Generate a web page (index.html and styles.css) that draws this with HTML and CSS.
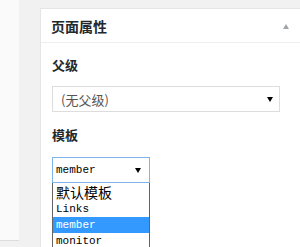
FILE: index.html
```html
<!DOCTYPE html>
<html lang="zh-CN">

<head>
    <meta charset="UTF-8">
    <meta name="viewport" content="width=device-width, initial-scale=1.0">
    <title>页面属性</title>

    <link rel="stylesheet" href="styles.css">
</head>

<body>
    <div class="wrap">
        <!-- 左側欄 -->
        <div class="side"></div>

        <!-- 頁面屬性面板 -->
        <div class="postbox">
            <div class="postbox-head">
                <h2 class="postbox-title">页面属性</h2>
                <span class="toggle"></span>
            </div>

            <div class="postbox-inside">
                <p class="field-label">父级</p>
                <div class="select select-parent">
                    <span class="select-value">(无父级)</span>
                    <span class="select-arrow"></span>
                </div>

                <p class="field-label field-template">模板</p>
                <div class="dropdown">
                    <div class="select select-template">
                        <span class="select-value mono">member</span>
                        <span class="select-arrow"></span>
                    </div>
                    <ul class="options">
                        <li class="option option-cjk">默认模板</li>
                        <li class="option">Links</li>
                        <li class="option selected">member</li>
                        <li class="option">monitor</li>
                    </ul>
                </div>
            </div>
        </div>
    </div>
</body>

</html>
```

FILE: styles.css
```css
html,
body {
    margin: 0;
    padding: 0;
    background-color: #f1f1f1;
    overflow: hidden;
    font-family: "Noto Sans CJK SC", "Liberation Sans", sans-serif;
    color: #23282d;
}

.wrap {
    display: flex;
    align-items: flex-start;
    width: 300px;
    height: 247px;
    overflow: hidden;
}

/* 左側欄 */
.side {
    flex: 0 0 19px;
    height: 240px;
    background-color: #fafafa;
    border-bottom: 1px solid #dcdcdc;
}

/* 面板（右邊與底部被截掉） */
.postbox {
    flex: 0 0 260px;
    box-sizing: border-box;
    margin-left: 21px;
    margin-top: 8px;
    height: 239px;
    overflow: hidden;
    background-color: #fff;
    border: 1px solid #e5e5e5;
    border-right: none;
    border-bottom: none;
}

.postbox-head {
    display: flex;
    align-items: center;
    justify-content: space-between;
    height: 33px;
    padding: 0 11px 0 10px;
    border-bottom: 1px solid #eee;
}

.postbox-title {
    margin: 0;
    font-size: 14px;
    font-weight: bold;
    line-height: 18px;
}

.toggle {
    width: 0;
    height: 0;
    border-left: 3px solid transparent;
    border-right: 3px solid transparent;
    border-bottom: 5px solid #a0a5aa;
    margin-top: 1px;
}

.postbox-inside {
    padding: 0 0 0 11px;
}

.field-label {
    margin: 13px 0 12px;
    font-size: 13px;
    font-weight: bold;
    line-height: 18px;
}

.field-template {
    margin: 14px 0 13px;
}

/* 下拉框 */
.select {
    display: flex;
    align-items: center;
    justify-content: space-between;
    box-sizing: border-box;
    height: 26px;
    border: 1px solid #ddd;
    background-color: #fff;
}

.select-parent {
    width: 228px;
    padding: 0 6px 0 8px;
}

.select-parent .select-value {
    font-size: 13px;
    color: #555;
}

.select-template {
    width: 98px;
    padding: 0 8px 0 3px;
    border-color: #7eb4ea;
}

.select-arrow {
    width: 0;
    height: 0;
    border-left: 3px solid transparent;
    border-right: 3px solid transparent;
    border-top: 5px solid #000;
}

.mono {
    font-family: "Liberation Mono", "DejaVu Sans Mono", monospace;
    font-size: 11px;
    color: #000;
}

.dropdown {
    width: 98px;
}

.options {
    list-style: none;
    margin: 0;
    padding: 0;
    border: 1px solid #646464;
    border-top: none;
    background-color: #fff;
}

.option {
    height: 16px;
    line-height: 16px;
    padding-left: 3px;
    font-family: "Liberation Mono", "DejaVu Sans Mono", monospace;
    font-size: 11px;
    color: #000;
}

.option-cjk {
    height: 18px;
    line-height: 18px;
    font-family: "Noto Sans CJK SC", sans-serif;
    font-size: 14px;
}

.option.selected {
    background-color: #3399ff;
    color: #fff;
}
```
